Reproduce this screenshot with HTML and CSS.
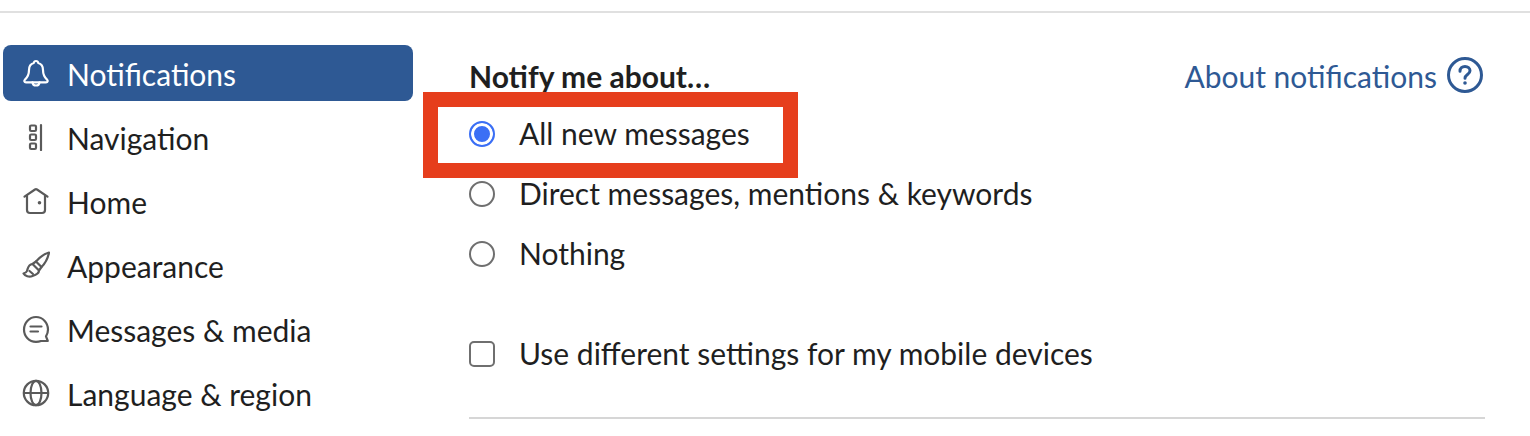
FILE: index.html
```html
<!DOCTYPE html>
<html>
    <head>
        <meta charset="utf-8">
        <title>Settings</title>
        <link rel="stylesheet" href="styles.css">
    </head>
    <body>
        <div class="page">
            <nav class="sidebar">
                <a class="nav_item active">
                    <svg class="nav_icon" viewBox="0 0 28 28"><path d="M14 2c-1.200 0-2.100.9-2.300 2C8.500 5 7 7.800 7 11c0 4.500-1 6.800-4 9.600-1.200 1.100-.8 2.700 1 2.700h20c1.800 0 2.200-1.600 1-2.700-3-2.800-4-5.100-4-9.600 0-3.200-1.500-6-4.700-7-.2-1.100-1.100-2-2.300-2z"/><path d="M10.500 23.300c.2 1.900 1.700 3.200 3.500 3.200s3.300-1.300 3.500-3.200"/></svg>
                    <span>Notifications</span>
                </a>
                <a class="nav_item">
                    <svg class="nav_icon" viewBox="0 0 28 28"><rect x="8" y="2.500" width="6" height="5.500" rx="1.200"/><rect x="8" y="11.500" width="6" height="5.500" rx="1.200"/><rect x="8" y="20.500" width="6" height="5.500" rx="1.200"/><path d="M19 2v25"/></svg>
                    <span>Navigation</span>
                </a>
                <a class="nav_item">
                    <svg class="nav_icon" viewBox="0 0 28 28"><path d="M2.500 9.700L13 2.500c.6-.4 1.400-.4 2 0l10.500 7.200"/><path d="M5 8.500V23c0 2 1 3 3 3h12c2 0 3-1 3-3V8.500"/><circle class="dot" cx="17.500" cy="15.700" r="1.800"/></svg>
                    <span>Home</span>
                </a>
                <a class="nav_item">
                    <svg class="nav_icon" viewBox="0 0 28 28"><path d="M27 1.500C22 3 17 7 14 10.500l5.500 5.500C23 12.500 26 7 27 1.500z"/><path d="M14 10.500L10.500 13l6.500 6.500 2.500-3.500"/><path d="M10.500 13C6 13.500 6 17 5 20c-.5 1.500-2 2-3.500 2.500C3 25 7 26.500 10.500 25c3.500-1 6.500-3 6.500-5.500"/><path d="M7.500 20l3.500 3"/></svg>
                    <span>Appearance</span>
                </a>
                <a class="nav_item">
                    <svg class="nav_icon" viewBox="0 0 28 28"><path d="M25.800 26H19c-1.500 .6-3.200 .9-5 .9C7.100 26.900 2 21.300 2 14.500S7.400 2 14 2s12 5.600 12 12.500c0 2.500-.7 4.800-2 6.800z"/><path d="M8.500 11.500h11M8.500 16.500h7.500"/></svg>
                    <span>Messages &amp; media</span>
                </a>
                <a class="nav_item">
                    <svg class="nav_icon" viewBox="0 0 28 28"><circle cx="14" cy="14" r="12.200"/><ellipse cx="14" cy="14" rx="5.500" ry="12.200"/><path d="M2 14h24"/></svg>
                    <span>Language &amp; region</span>
                </a>
            </nav>

            <main class="content">
                <div class="content_head">
                    <div class="title">Notify me about…</div>
                    <a class="help_link">
                        <span>About notifications</span>
                        <svg class="help_icon" viewBox="0 0 36 36"><circle cx="18" cy="18" r="16.500"/><path d="M13 14.200c0-3 2.200-4.700 5-4.700s5 1.700 5 4.300c0 3.700-5 3.700-5 7.400"/><circle class="dot" cx="18" cy="26" r="1.800"/></svg>
                    </a>
                </div>

                <div class="options">
                    <label class="option"><span class="radio checked"></span><span>All new messages</span></label>
                    <label class="option"><span class="radio"></span><span>Direct messages, mentions &amp; keywords</span></label>
                    <label class="option"><span class="radio"></span><span>Nothing</span></label>
                </div>

                <label class="option mobile_option"><span class="checkbox"></span><span>Use different settings for my mobile devices</span></label>

                <div class="divider"></div>
            </main>
        </div>

        <div class="highlight"></div>
    </body>
</html>
```

FILE: styles.css
```css
*{
    box-sizing: border-box;
}

body{
    margin: 0;
    height: 436px;
    overflow: hidden;
    background-color: white;
    font-family: Lato, "Open Sans", sans-serif;
    font-size: 30px;
    color: #1f1f1f;
}

.page{
    display: flex;
    margin-top: 11px;
    padding: 32px 0 0 3px;
    border-top: 2px solid #e0e0e0;
}

.sidebar{
    display: flex;
    flex-direction: column;
    gap: 8px;
    width: 410px;
    flex-shrink: 0;
}

.nav_item{
    display: flex;
    align-items: center;
    gap: 18px;
    height: 56px;
    padding-left: 19px;
    border-radius: 8px;
}

.nav_item span{
    margin: 2px 0 0 -1px;
}

.nav_item.active{
    background-color: #2e5994;
    color: white;
}

.nav_icon{
    width: 28px;
    height: 28px;
    flex-shrink: 0;
    fill: none;
    stroke: #5a5a5a;
    stroke-width: 2.2;
    stroke-linejoin: round;
    stroke-linecap: round;
}

.active .nav_icon{
    stroke: white;
}

.nav_icon .dot{
    fill: #5a5a5a;
    stroke: none;
}

.content{
    margin-left: 56px;
    width: 1016px;
}

.content_head{
    display: flex;
    justify-content: space-between;
    align-items: center;
    height: 62px;
    margin-bottom: 2px;
    padding-right: 2px;
}

.title{
    font-weight: 700;
}

.help_link{
    display: flex;
    align-items: center;
    gap: 10px;
    color: #2e5994;
}

.help_icon{
    width: 36px;
    height: 36px;
    margin-top: -2px;
    fill: none;
    stroke: #2e5994;
    stroke-width: 3;
    stroke-linecap: round;
}

.help_icon .dot{
    fill: #2e5994;
    stroke: none;
}

.options{
    display: flex;
    flex-direction: column;
    gap: 10px;
}

.option{
    display: flex;
    align-items: center;
    gap: 24px;
    height: 50px;
}

.option span:last-child{
    margin-top: -2px;
}

.radio{
    width: 26px;
    height: 26px;
    border: 2px solid #6f6f6f;
    border-radius: 50%;
    background-color: white;
}

.radio.checked{
    border-color: #3b6ff5;
    background-color: #3b6ff5;
    box-shadow: inset 0 0 0 3px white;
}

.checkbox{
    width: 26px;
    height: 26px;
    border: 2px solid #6f6f6f;
    border-radius: 5px;
}

.mobile_option{
    margin-top: 50px;
}

.divider{
    height: 2px;
    margin-top: 38px;
    background-color: #d6d6d6;
}

/* annotation drawn over the first radio */
.highlight{
    position: absolute;
    left: 423px;
    top: 92px;
    width: 375px;
    height: 86px;
    border: 15px solid #e63e1c;
}
```
